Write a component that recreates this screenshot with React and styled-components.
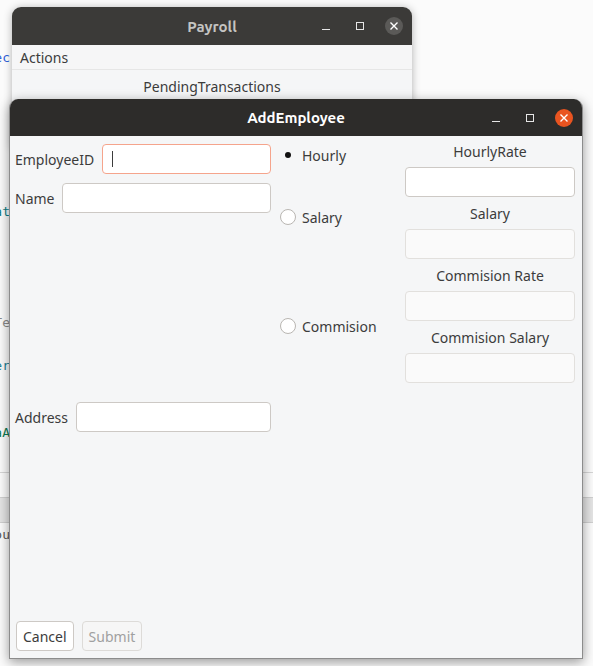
import React from "react";
import styled, { createGlobalStyle } from "styled-components";

const GlobalStyle = createGlobalStyle`
  html, body {
    margin: 0;
    background: #fbfbfb;
    font-family: "Noto Sans", "DejaVu Sans", sans-serif;
  }
`;

const codeLines = [
  { text: "getRec", color: "#2f5fd6", gap: 50 },
  { text: "dat", color: "#0e7f86", gap: 138 },
  { text: "Te", color: "#8a8a8a", gap: 95 },
  { text: "Emper", color: "#1a7f95", gap: 27 },
  { text: "dataA", color: "#0c7a50", gap: 51 },
];

const radios = [
  { label: "Hourly", checked: true, gap: 9 },
  { label: "Salary", checked: false, gap: 42 },
  { label: "Commision", checked: false, gap: 89 },
];

const rateFields = [
  { label: "HourlyRate", disabled: false },
  { label: "Salary", disabled: true },
  { label: "Commision Rate", disabled: true },
  { label: "Commision Salary", disabled: true },
];

function WindowControls({ active }) {
  return (
    <Controls>
      <ControlButton>
        <svg width="10" height="10" viewBox="0 0 10 10">
          <line x1="1" y1="8.5" x2="9" y2="8.5" stroke="#e6e6e6" strokeWidth="1" />
        </svg>
      </ControlButton>
      <ControlButton>
        <svg width="10" height="10" viewBox="0 0 10 10">
          <rect x="1.5" y="1.5" width="7" height="7" fill="none" stroke="#e6e6e6" strokeWidth="1" />
        </svg>
      </ControlButton>
      <CloseButton $active={active}>
        <svg width="10" height="10" viewBox="0 0 10 10">
          <path d="M1.5 1.5 L8.5 8.5 M8.5 1.5 L1.5 8.5" stroke="#fff" strokeWidth="1.4" />
        </svg>
      </CloseButton>
    </Controls>
  );
}

export default function App() {
  return (
    <>
      <GlobalStyle />
      <Desktop>
        <Backdrop>
          {codeLines.map((line) => (
            <CodeLine key={line.text} $color={line.color} $gap={line.gap}>
              {line.text}
            </CodeLine>
          ))}
          <BottomPanel>
            <PanelRow />
            <PanelBand />
            <CodeLine $color="#555" $gap={4}>
              Layou
            </CodeLine>
          </BottomPanel>
        </Backdrop>

        <PayrollWindow>
          <TitleBar>
            <span />
            <Title>Payroll</Title>
            <WindowControls />
          </TitleBar>
          <MenuBar>Actions</MenuBar>
          <Pending>PendingTransactions</Pending>
        </PayrollWindow>

        <DialogWindow>
          <TitleBar $active>
            <span />
            <Title $active>AddEmployee</Title>
            <WindowControls active />
          </TitleBar>
          <DialogBody>
            <FormGrid>
              <Column $top={8}>
                <FieldRow>
                  <Label>EmployeeID</Label>
                  <TextInput $focused>
                    <Caret />
                  </TextInput>
                </FieldRow>
                <FieldRow $gap={9}>
                  <Label>Name</Label>
                  <TextInput />
                </FieldRow>
                <FieldRow $gap={189}>
                  <Label>Address</Label>
                  <TextInput />
                </FieldRow>
              </Column>

              <Column>
                {radios.map((r) => (
                  <RadioRow key={r.label} $gap={r.gap}>
                    {r.checked ? <RadioDot /> : <RadioCircle />}
                    <Label>{r.label}</Label>
                  </RadioRow>
                ))}
              </Column>

              <Column $top={6}>
                {rateFields.map((f) => (
                  <RateGroup key={f.label}>
                    <RateLabel>{f.label}</RateLabel>
                    <TextInput $disabled={f.disabled} />
                  </RateGroup>
                ))}
              </Column>
            </FormGrid>
            <Footer>
              <Button>Cancel</Button>
              <Button $disabled>Submit</Button>
            </Footer>
          </DialogBody>
        </DialogWindow>
      </Desktop>
    </>
  );
}

const Desktop = styled.div`
  position: relative;
  width: 593px;
  height: 666px;
  overflow: hidden;
  background: #fbfbfb;
`;

const Backdrop = styled.div`
  display: flex;
  flex-direction: column;
  width: 100%;
`;

const CodeLine = styled.div`
  margin-top: ${(p) => p.$gap}px;
  width: 10px;
  height: 16px;
  overflow: hidden;
  display: flex;
  justify-content: flex-end;
  white-space: nowrap;
  font-family: "DejaVu Sans Mono", monospace;
  font-size: 13px;
  line-height: 16px;
  color: ${(p) => p.$color};
`;

const BottomPanel = styled.div`
  margin-top: 31px;
  display: flex;
  flex-direction: column;
`;

const PanelRow = styled.div`
  height: 24px;
  border-top: 1px solid #d6d6d6;
`;

const PanelBand = styled.div`
  height: 24px;
  background: #e4e4e4;
  border-top: 1px solid #cfcfcf;
  border-bottom: 1px solid #cfcfcf;
`;

const WindowFrame = styled.div`
  position: absolute;
  display: flex;
  flex-direction: column;
  border-radius: 9px 9px 0 0;
  overflow: hidden;
  background: #f5f6f7;
`;

const PayrollWindow = styled(WindowFrame)`
  left: 12px;
  top: 7px;
  width: 400px;
  height: 140px;
  box-shadow: 0 1px 8px rgba(0, 0, 0, 0.3);
`;

const DialogWindow = styled(WindowFrame)`
  left: 9px;
  top: 99px;
  width: 574px;
  height: 560px;
  border: 1px solid #8c8c8c;
  border-top: none;
  box-sizing: border-box;
  box-shadow: 0 3px 12px rgba(0, 0, 0, 0.4);
`;

const TitleBar = styled.div`
  height: ${(p) => (p.$active ? 37 : 38)}px;
  flex-shrink: 0;
  display: grid;
  grid-template-columns: 1fr auto 1fr;
  align-items: center;
  background: ${(p) => (p.$active ? "#2d2c2a" : "#3b3a38")};
`;

const Title = styled.div`
  font-family: "Ubuntu", "Noto Sans", sans-serif;
  font-weight: 700;
  font-size: 15px;
  color: ${(p) => (p.$active ? "#ffffff" : "#c4c4c2")};
`;

const Controls = styled.div`
  display: flex;
  justify-content: flex-end;
  align-items: center;
  gap: 16px;
  padding-right: 9px;
`;

const ControlButton = styled.div`
  width: 18px;
  height: 18px;
  display: flex;
  align-items: center;
  justify-content: center;
`;

const CloseButton = styled(ControlButton)`
  border-radius: 50%;
  background: ${(p) => (p.$active ? "#e95420" : "#5b5a58")};
`;

const MenuBar = styled.div`
  height: 24px;
  display: flex;
  align-items: center;
  padding-left: 8px;
  font-size: 14px;
  color: #3c3c3c;
  background: #f6f6f7;
  border-bottom: 1px solid #e6e6e6;
`;

const Pending = styled.div`
  height: 32px;
  display: flex;
  align-items: center;
  justify-content: center;
  font-size: 14px;
  color: #3c3c3c;
`;

const DialogBody = styled.div`
  flex: 1;
  display: flex;
  flex-direction: column;
  background: #f5f6f7;
  padding: 0 7px 7px 5px;
`;

const FormGrid = styled.div`
  flex: 1;
  display: grid;
  grid-template-columns: 256px 116px 170px;
  column-gap: 9px;
  align-items: start;
`;

const Column = styled.div`
  display: flex;
  flex-direction: column;
  padding-top: ${(p) => p.$top || 0}px;
`;

const FieldRow = styled.div`
  display: flex;
  align-items: center;
  gap: 8px;
  margin-top: ${(p) => p.$gap || 0}px;
`;

const Label = styled.span`
  font-size: 14px;
  color: #3c3c3c;
  white-space: nowrap;
`;

const TextInput = styled.div`
  flex: 1 0 auto;
  height: 30px;
  box-sizing: border-box;
  border-radius: 4px;
  display: flex;
  align-items: center;
  padding-left: 9px;
  background: ${(p) => (p.$disabled ? "#fafafa" : "#ffffff")};
  border: 1px solid
    ${(p) => (p.$focused ? "#f5a48c" : p.$disabled ? "#e2e0dd" : "#cdc9c5")};
`;

const Caret = styled.div`
  width: 1px;
  height: 16px;
  background: #3c3c3c;
`;

const RadioRow = styled.div`
  display: flex;
  align-items: center;
  gap: 6px;
  height: 20px;
  margin-top: ${(p) => p.$gap}px;
`;

const RadioCircle = styled.div`
  width: 16px;
  height: 16px;
  box-sizing: border-box;
  border-radius: 50%;
  border: 1px solid #b9b6b2;
  background: #ffffff;
`;

const RadioDot = styled.div`
  width: 16px;
  height: 16px;
  display: flex;
  align-items: center;
  justify-content: center;
  &::after {
    content: "";
    width: 6px;
    height: 6px;
    border-radius: 50%;
    background: #111;
  }
`;

const RateGroup = styled.div`
  display: flex;
  flex-direction: column;
  margin-bottom: 7px;
`;

const RateLabel = styled.div`
  height: 20px;
  line-height: 20px;
  margin-bottom: 5px;
  text-align: center;
  font-size: 14px;
  color: #3c3c3c;
`;

const Footer = styled.div`
  display: flex;
  gap: 8px;
  padding-left: 1px;
`;

const Button = styled.div`
  height: 30px;
  box-sizing: border-box;
  padding: 0 6px;
  display: flex;
  align-items: center;
  border-radius: 4px;
  font-size: 14px;
  color: ${(p) => (p.$disabled ? "#a0a0a0" : "#3c3c3c")};
  background: ${(p) => (p.$disabled ? "#f6f6f6" : "#ffffff")};
  border: 1px solid ${(p) => (p.$disabled ? "#dddbd8" : "#cdc9c5")};
`;
